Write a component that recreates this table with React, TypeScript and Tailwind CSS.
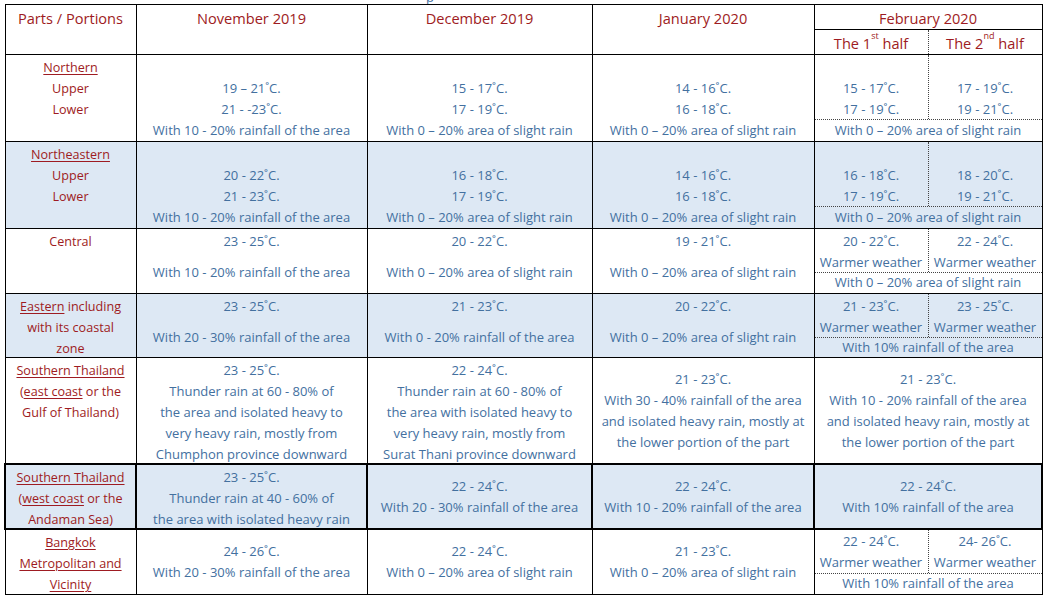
import React from "react";

const RED = "text-[#9e1b22]";
const BLUE = "text-[#43709f]";
const SHADE = "bg-[#dde8f4]";

type Align = "top" | "middle";

const D = "˚";

function Lines({ lines, gap }: { lines: string[]; gap?: boolean }) {
  return (
    <>
      {lines.map((l, i) => (
        <div key={i} className={`h-[21px] leading-[21px] whitespace-nowrap ${gap && i === 1 ? "mt-[10px]" : ""}`}>
          {l === "" ? "\u00a0" : l}
        </div>
      ))}
    </>
  );
}

function DataCell({
  lines,
  h,
  align = "top",
  gap = false,
  shade,
}: {
  lines: string[];
  h: number;
  align?: Align;
  gap?: boolean;
  shade?: boolean;
}) {
  return (
    <td className={`border border-black p-0 align-top text-center ${BLUE} ${shade ? SHADE : ""}`}>
      <div
        className={`flex flex-col overflow-visible ${align === "top" ? "justify-start pt-[2px]" : "justify-center"}`}
        style={{ height: h }}
      >
        <Lines lines={lines} gap={gap} />
      </div>
    </td>
  );
}

function SplitCell({
  left,
  right,
  bottom,
  h,
  topH,
  pt,
  shade,
}: {
  left: string[];
  right: string[];
  bottom: string;
  h: number;
  topH: number;
  pt: number;
  shade?: boolean;
}) {
  return (
    <td className={`border border-black p-0 align-top ${BLUE} ${shade ? SHADE : ""}`}>
      <div className="flex flex-col" style={{ height: h }}>
        <div className="flex shrink-0" style={{ height: topH }}>
          <div className="w-[114px] border-r border-dotted border-[#444] text-center" style={{ paddingTop: pt }}>
            <Lines lines={left} />
          </div>
          <div className="flex-1 text-center" style={{ paddingTop: pt }}>
            <Lines lines={right} />
          </div>
        </div>
        <div className="flex-1 border-t border-dotted border-[#444] flex items-center justify-center whitespace-nowrap">
          {bottom}
        </div>
      </div>
    </td>
  );
}

function Region({ children, h, shade }: { children: React.ReactNode; h: number; shade?: boolean }) {
  return (
    <td className={`border border-black p-0 align-top text-center ${RED} text-[12.6px] ${shade ? SHADE : ""}`}>
      <div className="flex flex-col pt-[2px] overflow-visible" style={{ height: h }}>
        {children}
      </div>
    </td>
  );
}

function RL({ children }: { children: React.ReactNode }) {
  return <div className="h-[21px] leading-[21px] whitespace-nowrap">{children}</div>;
}

const U = ({ children }: { children: React.ReactNode }) => (
  <span className="underline underline-offset-2 decoration-1">{children}</span>
);

function HeadCell({ children }: { children: React.ReactNode }) {
  return (
    <td className={`border border-black p-0 align-top text-center ${RED} text-[14.6px]`}>
      <div className="h-[49px] pt-[3px] leading-[21px] whitespace-nowrap">{children}</div>
    </td>
  );
}

export default function App() {
  return (
    <div
      className="w-[1044px] h-[599px] bg-white overflow-hidden relative"
      style={{ fontFamily: '"Open Sans", "Noto Sans", sans-serif' }}
    >
      <div className="h-[4px] overflow-hidden relative">
        <div className={`absolute left-[426px] bottom-0 text-[13px] leading-[13px] ${BLUE}`}>p</div>
      </div>
      <table className="ml-[4px] table-fixed border-collapse w-[1037px] text-[13px]">
        <colgroup>
          <col className="w-[131px]" />
          <col className="w-[231px]" />
          <col className="w-[225px]" />
          <col className="w-[222px]" />
          <col className="w-[228px]" />
        </colgroup>
        <tbody>
          <tr>
            <HeadCell>Parts / Portions</HeadCell>
            <HeadCell>November 2019</HeadCell>
            <HeadCell>December 2019</HeadCell>
            <HeadCell>January 2020</HeadCell>
            <td className={`border border-black p-0 align-top ${RED} text-[14.6px]`}>
              <div className="flex flex-col h-[49px]">
                <div className="h-[25px] shrink-0 border-b border-black text-center leading-[21px] pt-[3px] whitespace-nowrap">
                  February 2020
                </div>
                <div className="flex flex-1">
                  <div className="w-[114px] border-r border-dotted border-[#444] text-center leading-[26px] whitespace-nowrap">
                    The 1<sup className="text-[9px] align-[6px]">st</sup> half
                  </div>
                  <div className="flex-1 text-center leading-[26px] whitespace-nowrap">
                    The 2<sup className="text-[9px] align-[6px]">nd</sup> half
                  </div>
                </div>
              </div>
            </td>
          </tr>

          <tr>
            <Region h={86}>
              <RL>
                <U>Northern</U>
              </RL>
              <RL>Upper</RL>
              <RL>Lower</RL>
            </Region>
            <DataCell h={86} lines={["", `19 – 21${D}C.`, `21 - -23${D}C.`, "With 10 - 20% rainfall of the area"]} />
            <DataCell h={86} lines={["", `15 - 17${D}C.`, `17 - 19${D}C.`, "With 0 – 20% area of slight rain"]} />
            <DataCell h={86} lines={["", `14 - 16${D}C.`, `16 - 18${D}C.`, "With 0 – 20% area of slight rain"]} />
            <SplitCell
              h={86}
              left={["", `15 - 17${D}C.`, `17 - 19${D}C.`]}
              right={["", `17 - 19${D}C.`, `19 - 21${D}C.`]}
              bottom="With 0 – 20% area of slight rain"
              topH={64}
              pt={2}
            />
          </tr>

          <tr>
            <Region h={86} shade>
              <RL>
                <U>Northeastern</U>
              </RL>
              <RL>Upper</RL>
              <RL>Lower</RL>
            </Region>
            <DataCell h={86} shade lines={["", `20 - 22${D}C.`, `21 - 23${D}C.`, "With 10 - 20% rainfall of the area"]} />
            <DataCell h={86} shade lines={["", `16 - 18${D}C.`, `17 - 19${D}C.`, "With 0 – 20% area of slight rain"]} />
            <DataCell h={86} shade lines={["", `14 - 16${D}C.`, `16 - 18${D}C.`, "With 0 – 20% area of slight rain"]} />
            <SplitCell
              h={86}
              shade
              left={["", `16 - 18${D}C.`, `17 - 19${D}C.`]}
              right={["", `18 - 20${D}C.`, `19 - 21${D}C.`]}
              bottom="With 0 – 20% area of slight rain"
              topH={64}
              pt={2}
            />
          </tr>

          <tr>
            <Region h={64}>
              <RL>Central</RL>
            </Region>
            <DataCell h={64} gap lines={[`23 - 25${D}C.`, "With 10 - 20% rainfall of the area"]} />
            <DataCell h={64} gap lines={[`20 - 22${D}C.`, "With 0 – 20% area of slight rain"]} />
            <DataCell h={64} gap lines={[`19 - 21${D}C.`, "With 0 – 20% area of slight rain"]} />
            <SplitCell
              h={64}
              left={[`20 - 22${D}C.`, "Warmer weather"]}
              right={[`22 - 24${D}C.`, "Warmer weather"]}
              bottom="With 0 – 20% area of slight rain"
              topH={43}
              pt={2}
            />
          </tr>

          <tr>
            <Region h={63} shade>
              <RL>
                <U>Eastern</U> including
              </RL>
              <RL>with its coastal</RL>
              <RL>zone</RL>
            </Region>
            <DataCell h={63} shade gap lines={[`23 - 25${D}C.`, "With 20 - 30% rainfall of the area"]} />
            <DataCell h={63} shade gap lines={[`21 - 23${D}C.`, "With 0 - 20% rainfall of the area"]} />
            <DataCell h={63} shade gap lines={[`20 - 22${D}C.`, "With 0 – 20% area of slight rain"]} />
            <SplitCell
              h={63}
              shade
              left={[`21 - 23${D}C.`, "Warmer weather"]}
              right={[`23 - 25${D}C.`, "Warmer weather"]}
              bottom="With 10% rainfall of the area"
              topH={43}
              pt={2}
            />
          </tr>

          <tr>
            <Region h={105}>
              <RL>
                <U>Southern Thailand</U>
              </RL>
              <RL>
                (<U>east coast</U> or the
              </RL>
              <RL>Gulf of Thailand)</RL>
            </Region>
            <DataCell
              h={105}
              lines={[
                `23 - 25${D}C.`,
                "Thunder rain at 60 - 80% of",
                "the area and isolated heavy to",
                "very heavy rain, mostly from",
                "Chumphon province downward",
              ]}
            />
            <DataCell
              h={105}
              lines={[
                `22 - 24${D}C.`,
                "Thunder rain at 60 - 80% of",
                "the area with isolated heavy to",
                "very heavy rain, mostly from",
                "Surat Thani province downward",
              ]}
            />
            <DataCell
              h={105}
              align="middle"
              lines={[
                `21 - 23${D}C.`,
                "With 30 - 40% rainfall of the area",
                "and isolated heavy rain, mostly at",
                "the lower portion of the part",
              ]}
            />
            <DataCell
              h={105}
              align="middle"
              lines={[
                `21 - 23${D}C.`,
                "With 10 - 20% rainfall of the area",
                "and isolated heavy rain, mostly at",
                "the lower portion of the part",
              ]}
            />
          </tr>

          <tr className="[&>td]:border-2">
            <Region h={63} shade>
              <RL>
                <U>Southern Thailand</U>
              </RL>
              <RL>
                (<U>west coast</U> or the
              </RL>
              <RL>Andaman Sea)</RL>
            </Region>
            <DataCell
              h={63}
              shade
              lines={[`23 - 25${D}C.`, "Thunder rain at 40 - 60% of", "the area with isolated heavy rain"]}
            />
            <DataCell h={63} shade align="middle" lines={[`22 - 24${D}C.`, "With 20 - 30% rainfall of the area"]} />
            <DataCell h={63} shade align="middle" lines={[`22 - 24${D}C.`, "With 10 - 20% rainfall of the area"]} />
            <DataCell h={63} shade align="middle" lines={[`22 - 24${D}C.`, "With 10% rainfall of the area"]} />
          </tr>

          <tr>
            <Region h={64}>
              <RL>
                <U>Bangkok</U>
              </RL>
              <RL>
                <U>Metropolitan and</U>
              </RL>
              <RL>
                <U>Vicinity</U>
              </RL>
            </Region>
            <DataCell h={64} align="middle" lines={[`24 - 26${D}C.`, "With 20 - 30% rainfall of the area"]} />
            <DataCell h={64} align="middle" lines={[`22 - 24${D}C.`, "With 0 – 20% area of slight rain"]} />
            <DataCell h={64} align="middle" lines={[`21 - 23${D}C.`, "With 0 – 20% area of slight rain"]} />
            <SplitCell
              h={64}
              left={[`22 - 24${D}C.`, "Warmer weather"]}
              right={[`24- 26${D}C.`, "Warmer weather"]}
              bottom="With 10% rainfall of the area"
              topH={43}
              pt={1}
            />
          </tr>
        </tbody>
      </table>
    </div>
  );
}
